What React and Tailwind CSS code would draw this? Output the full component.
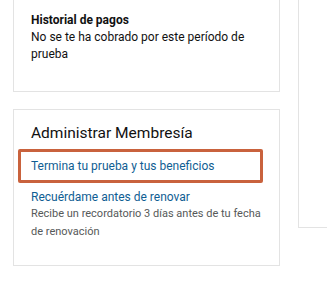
export default function App() {
  return (
    <div className="w-[327px] h-[287px] overflow-hidden bg-white" style={{ fontFamily: 'Roboto, "Noto Sans", Arial, sans-serif' }}>
      <div className="flex items-start">
        <div className="ml-[13px] w-[267px] flex flex-col">
          <div className="-mt-[10px] h-[102px] border border-[#e3e3e3] pl-[17px] pt-[21px] text-[12px] leading-[17px] text-[#111]">
            <div className="font-bold">Historial de pagos</div>
            <div className="w-[230px]">No se te ha cobrado por este período de prueba</div>
          </div>
          <div className="mt-[17px] h-[157px] border border-[#e3e3e3] pt-[13px]">
            <div className="pl-[17px] text-[15.5px] leading-[20px] text-[#111]">Administrar Membresía</div>
            <div className="mt-[6px] ml-[4px] w-[245px] h-[34px] border-[3px] border-[#c9623d] rounded-[2px] pl-[10px] flex items-center text-[12px] text-[#0f5e93]">
              Termina tu prueba y tus beneficios
            </div>
            <div className="pl-[17px] mt-[6px] text-[12px] leading-[16px] text-[#0f5e93]">Recuérdame antes de renovar</div>
            <div className="pl-[17px] w-[250px] text-[11px] leading-[18px] text-[#565959]">Recibe un recordatorio 3 días antes de tu fecha de renovación</div>
          </div>
        </div>
        <div className="ml-[18px] -mt-[10px] h-[238px] flex-1 border border-r-0 border-[#e3e3e3]" />
      </div>
    </div>
  );
}
